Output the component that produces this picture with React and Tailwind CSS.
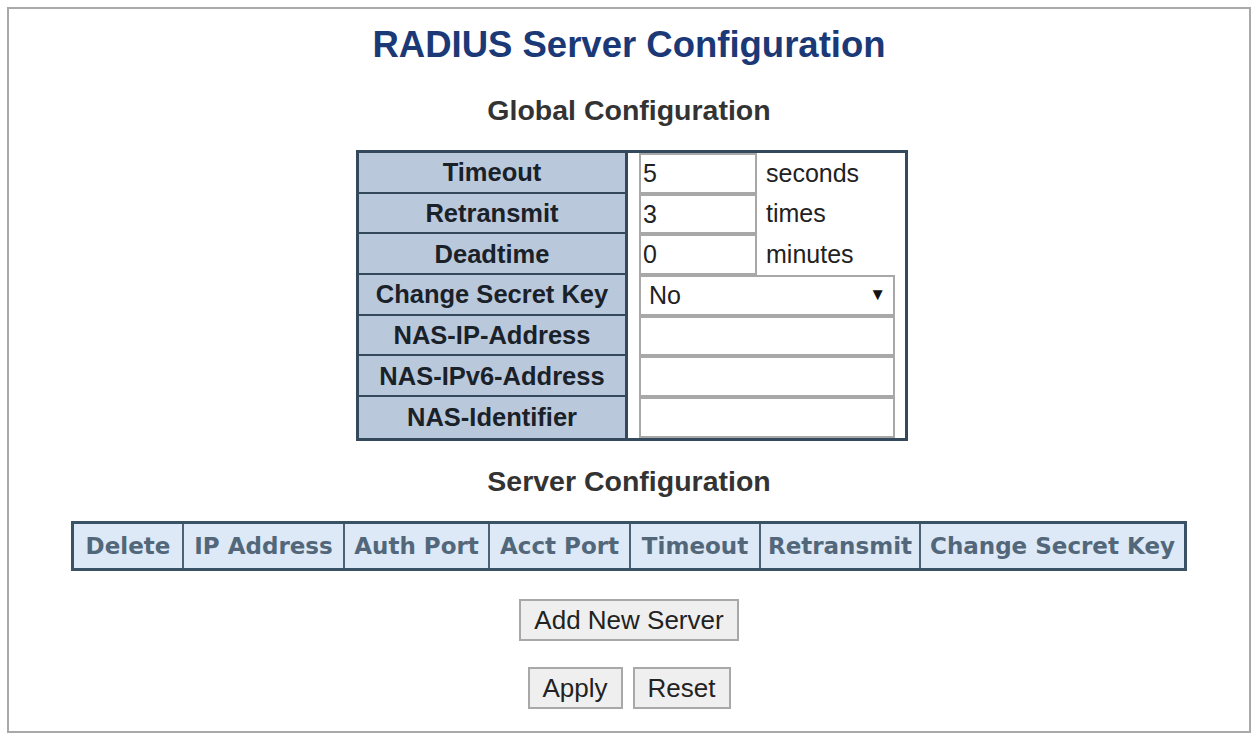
import React from "react";

const globalRows = [
  { label: "Timeout", value: "5", unit: "seconds" },
  { label: "Retransmit", value: "3", unit: "times" },
  { label: "Deadtime", value: "0", unit: "minutes" },
  { label: "Change Secret Key", select: "No" },
  { label: "NAS-IP-Address", wide: true },
  { label: "NAS-IPv6-Address", wide: true },
  { label: "NAS-Identifier", wide: true },
];

const serverCols = [
  { title: "Delete", w: "w-[108px]" },
  { title: "IP Address", w: "w-[161px]" },
  { title: "Auth Port", w: "w-[145px]" },
  { title: "Acct Port", w: "w-[141px]" },
  { title: "Timeout", w: "w-[130px]" },
  { title: "Retransmit", w: "w-[160px]" },
  { title: "Change Secret Key", w: "flex-1" },
];

const Button = ({ children, className = "" }) => (
  <button
    type="button"
    className={`h-[42px] border-2 border-[#a8a8a8] bg-[#efefef] text-[26px] text-[#222] font-['Liberation_Sans',Arial,sans-serif] ${className}`}
  >
    {children}
  </button>
);

const ValueCell = ({ row }) => {
  if (row.select) {
    return (
      <div className="relative w-[256px] h-full">
        <div className="w-full h-full border-2 border-[#a8a8a8] bg-white flex items-center pl-[8px] text-[25px] text-[#222]">
          {row.select}
        </div>
        <span className="absolute right-[9px] top-[11px] text-[17px] leading-none text-[#111]">▼</span>
      </div>
    );
  }
  if (row.wide) {
    return <div className="w-[256px] h-full border-2 border-[#a8a8a8] bg-white" />;
  }
  return (
    <div className="flex h-full items-center">
      <input
        defaultValue={row.value}
        className="w-[118px] h-full border-2 border-[#a8a8a8] bg-white pl-[2px] text-[25px] text-[#222] outline-none"
      />
      <span className="ml-[9px] text-[25px] text-[#222]">{row.unit}</span>
    </div>
  );
};

export default function App() {
  return (
    <div className="bg-white pt-[7px] pl-[7px] w-[1253px] h-[734px] font-['Liberation_Sans',Arial,sans-serif]">
      <div className="w-[1244px] h-[726px] border-2 border-[#a9a9a9] flex flex-col items-center">
        <h1 className="mt-[14px] text-[36.5px] leading-[44px] font-bold text-[#1b3977]">
          RADIUS Server Configuration
        </h1>

        <h2 className="mt-[26px] text-[28.5px] leading-[34px] font-bold text-[#333]">
          Global Configuration
        </h2>

        <div className="mt-[23px] ml-[6px] flex border-[3px] border-[#34495c]">
          <div className="w-[266px] flex flex-col">
            {globalRows.map((r, i) => (
              <div
                key={r.label}
                className={`h-[40.7px] flex items-center justify-center bg-[#b9c9db] text-[25.5px] font-bold text-[#1a2129] ${
                  i < globalRows.length - 1 ? "border-b-2 border-[#34495c]" : ""
                }`}
              >
                {r.label}
              </div>
            ))}
          </div>
          <div className="w-[280px] border-l-[3px] border-[#34495c] bg-white px-[11px] flex flex-col">
            {globalRows.map((r) => (
              <div key={r.label} className="h-[40.7px]">
                <ValueCell row={r} />
              </div>
            ))}
          </div>
        </div>

        <h2 className="mt-[23px] text-[28.5px] leading-[34px] font-bold text-[#333]">
          Server Configuration
        </h2>

        <div className="mt-[23px] w-[1116px] h-[50px] flex border-[3px] border-[#3a5266] bg-[#dde9f6]">
          {serverCols.map((c, i) => (
            <div
              key={c.title}
              className={`${c.w} flex items-center justify-center text-[23px] font-bold text-[#52677a] font-['DejaVu_Sans',Verdana,sans-serif] ${
                i > 0 ? "border-l-2 border-[#4b6276]" : ""
              }`}
            >
              {c.title}
            </div>
          ))}
        </div>

        <Button className="mt-[28px] w-[220px]">Add New Server</Button>

        <div className="mt-[26px] flex gap-[10px]">
          <Button className="w-[95px]">Apply</Button>
          <Button className="w-[98px]">Reset</Button>
        </div>
      </div>
    </div>
  );
}
